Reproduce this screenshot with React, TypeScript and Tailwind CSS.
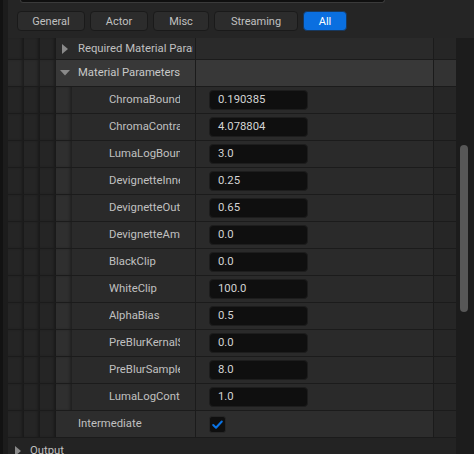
import React from "react";

const Block = ({ c = "bg-[#252525]" }: { c?: string }) => (
  <div className={`w-[16px] shrink-0 ${c} shadow-[inset_-3px_0_3px_-1px_rgba(0,0,0,0.35)]`} />
);

const RightArrow = () => (
  <svg width="6" height="10" viewBox="0 0 6 10" className="shrink-0">
    <polygon points="0,0 6,5 0,10" fill="#8a8a8a" />
  </svg>
);

const DownArrow = () => (
  <svg width="10" height="6" viewBox="0 0 10 6" className="shrink-0">
    <polygon points="0,0 10,0 5,5.5" fill="#8a8a8a" />
  </svg>
);

const Divider = () => <div className="w-[1px] shrink-0 bg-[#1b1b1b]" />;

function ChildRow({ label, value }: { label: string; value: string }) {
  return (
    <div className="flex h-[27px] shrink-0 border-b border-[#1b1b1b] bg-[#2a2a2a]">
      <Block />
      <Block />
      <Block />
      <Block c="bg-[#2f2f2f]" />
      <div className="w-[123px] shrink-0 pl-[37px] flex items-center">
        <div className="w-[71px] overflow-hidden whitespace-nowrap text-[11.3px] text-[#c0c0c0]">{label}</div>
      </div>
      <Divider />
      <div className="w-[237px] shrink-0 pl-[13px] flex items-center">
        <div className="w-[99px] h-[20px] rounded-[4px] bg-[#0f0f0f] border border-[#1d1d1d] pl-[8px] flex items-center text-[11.3px] text-[#d4d4d4]">
          {value}
        </div>
      </div>
      <Divider />
      <div className="flex-1 bg-[#262626]" />
    </div>
  );
}

const params: [string, string][] = [
  ["ChromaBound", "0.190385"],
  ["ChromaContrast", "4.078804"],
  ["LumaLogBound", "3.0"],
  ["DevignetteInner", "0.25"],
  ["DevignetteOuter", "0.65"],
  ["DevignetteAmount", "0.0"],
  ["BlackClip", "0.0"],
  ["WhiteClip", "100.0"],
  ["AlphaBias", "0.5"],
  ["PreBlurKernalSize", "0.0"],
  ["PreBlurSamples", "8.0"],
  ["LumaLogContrast", "1.0"],
];

const tabs: { label: string; w: string; active?: boolean }[] = [
  { label: "General", w: "w-[68px]" },
  { label: "Actor", w: "w-[58px]" },
  { label: "Misc", w: "w-[56px]" },
  { label: "Streaming", w: "w-[84px]" },
  { label: "All", w: "w-[44px]", active: true },
];

export default function App() {
  return (
    <div className="w-[474px] h-[454px] overflow-hidden flex bg-[#252525] font-['Roboto',sans-serif] text-[11px] leading-none">
      <div className="w-[8px] shrink-0 bg-[#1c1c1c] border-l-[3px] border-[#121212]" />
      <div className="flex-1 flex flex-col min-w-0">
        <div className="ml-[12px] w-[365px] h-[3px] shrink-0 bg-[#0f0f0f] border border-t-0 border-[#3a3a3a] rounded-b-[4px]" />
        <div className="mt-[8px] pl-[9px] flex gap-[5px] h-[20px] shrink-0">
          {tabs.map((t) => (
            <div
              key={t.label}
              className={`${t.w} h-[20px] rounded-[4px] border flex items-center justify-center ${
                t.active
                  ? "bg-[#0a6fe0] border-[#17385e] text-white"
                  : "bg-[#2c2c2c] border-[#1a1a1a] text-[#c0c0c0]"
              }`}
            >
              {t.label}
            </div>
          ))}
        </div>
        <div className="mt-[7px] flex flex-1 min-h-0">
          <div className="w-[448px] shrink-0 flex flex-col overflow-hidden">
            {/* Required Material Parameters */}
            <div className="flex h-[22px] shrink-0 border-b border-[#1b1b1b] bg-[#2a2a2a]">
              <Block />
              <Block />
              <Block />
              <div className="w-[139px] shrink-0 pl-[6px] flex items-center gap-[10px] text-[11.3px] text-[#c0c0c0]">
                <RightArrow />
                <div className="w-[115px] overflow-hidden whitespace-nowrap">Required Material Parameters</div>
              </div>
              <Divider />
              <div className="w-[237px] shrink-0" />
              <Divider />
              <div className="flex-1 bg-[#262626]" />
            </div>
            {/* Material Parameters */}
            <div className="flex h-[27px] shrink-0 border-b border-[#1b1b1b] bg-[#383838]">
              <Block c="bg-[#2a2a2a]" />
              <Block c="bg-[#2a2a2a]" />
              <Block c="bg-[#2a2a2a]" />
              <div className="w-[139px] shrink-0 pl-[4px] flex items-center gap-[8px] whitespace-nowrap text-[11.3px] text-[#c8c8c8]">
                <DownArrow />
                <span>Material Parameters</span>
              </div>
              <Divider />
              <div className="w-[237px] shrink-0" />
              <Divider />
              <div className="flex-1 bg-[#333333]" />
            </div>
            {params.map(([l, v]) => (
              <ChildRow key={l} label={l} value={v} />
            ))}
            {/* Intermediate */}
            <div className="flex h-[27px] shrink-0 border-b border-[#1b1b1b] bg-[#2d2d2d]">
              <Block />
              <Block />
              <Block />
              <div className="w-[139px] shrink-0 pl-[22px] flex items-center text-[11.3px] text-[#c0c0c0]">Intermediate</div>
              <Divider />
              <div className="w-[237px] shrink-0 pl-[13px] flex items-center">
                <div className="w-[17px] h-[17px] rounded-[3px] bg-[#0f0f0f] border border-[#262626] flex items-center justify-center">
                  <svg width="13" height="13" viewBox="0 0 13 13">
                    <path d="M2.2 7 L5 9.8 L10.8 3.5" fill="none" stroke="#0a74e6" strokeWidth="2" strokeLinecap="round" strokeLinejoin="round" />
                  </svg>
                </div>
              </div>
              <Divider />
              <div className="flex-1 bg-[#262626]" />
            </div>
            {/* Output */}
            <div className="flex h-[26px] shrink-0 bg-[#232323] items-center pl-[7px] gap-[9px] text-[11.3px] text-[#c0c0c0]">
              <RightArrow />
              <span>Output</span>
            </div>
          </div>
          <div className="flex-1 bg-[#1c1c1c] pt-[107px] pl-[4px]">
            <div className="w-[8px] h-[167px] rounded-full bg-[#575757]" />
          </div>
        </div>
      </div>
    </div>
  );
}
